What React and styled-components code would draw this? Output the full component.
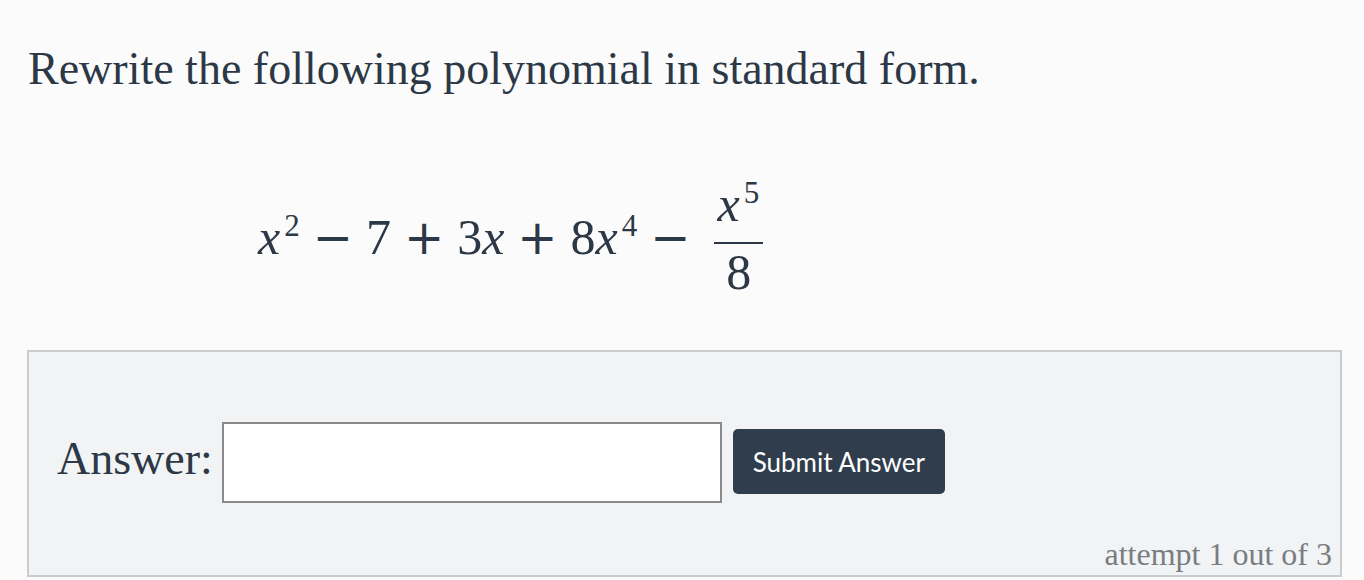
import React from "react";
import styled, { createGlobalStyle } from "styled-components";

const Global = createGlobalStyle`
  html, body { margin: 0; padding: 0; background: #fbfbfb; }
  body { font-family: "Liberation Serif", serif; color: #2c3846; }
`;

const Page = styled.div`
  width: 1364px;
  height: 580px;
  box-sizing: border-box;
  padding: 43px 22px 0 27px;
  overflow: hidden;
`;

const Heading = styled.h1`
  margin: 0 0 0 1px;
  font-family: "Liberation Serif", serif;
  font-weight: 400;
  font-size: 46px;
  line-height: 52px;
  color: #2c3846;
`;

const MathBlock = styled.div`
  margin: 73px 0 0 231px;
  height: 140px;
  display: flex;
  align-items: center;
  font-family: "Liberation Serif", serif;
  font-size: 50px;
  color: #2c3846;
`;

const Expr = styled.div`
  line-height: 60px;
  white-space: nowrap;
`;

const Var = styled.span`
  font-style: italic;
`;

const Sup = styled.span`
  font-size: 31px;
  vertical-align: 18px;
  line-height: 0;
  margin-left: 4px;
`;

const Op = styled.span`
  font-family: "DejaVu Sans", sans-serif;
  font-size: 48px;
  line-height: 0;
  margin: 0 ${(p) => p.$gap ?? 13}px;
`;

const Frac = styled.span`
  display: inline-flex;
  flex-direction: column;
  align-items: stretch;
  vertical-align: 33px;
  margin-left: 11px;
`;

const Num = styled.span`
  padding: 0 4px 13px 3px;
  border-bottom: 2px solid #2c3846;
  line-height: 1;
  text-align: center;
`;

const Den = styled.span`
  padding-top: 3px;
  line-height: 1;
  text-align: center;
`;

const Panel = styled.div`
  margin-top: 42px;
  height: 227px;
  box-sizing: border-box;
  border: 2px solid #cbcccf;
  background: #f2f3f5;
  display: flex;
  flex-direction: column;
  padding: 70px 8px 0 28px;
`;

const Row = styled.div`
  display: flex;
  align-items: center;
`;

const Label = styled.label`
  font-family: "Liberation Serif", serif;
  font-size: 46px;
  color: #2c3846;
  margin: 0 9px 8px 0;
`;

const Input = styled.input`
  width: 500px;
  height: 81px;
  box-sizing: border-box;
  border: 2px solid #8a8a8a;
  background: #fff;
  margin-right: 11px;
  outline: none;
`;

const Button = styled.button`
  height: 65px;
  width: 212px;
  margin-bottom: 2px;
  border: none;
  border-radius: 5px;
  background: #2f3d4d;
  color: #fff;
  font-family: Lato, sans-serif;
  font-size: 26px;
  cursor: pointer;
`;

const Attempt = styled.div`
  margin-top: auto;
  align-self: flex-end;
  font-family: "Liberation Serif", serif;
  font-size: 32px;
  color: #7a7d80;
  line-height: 36px;
  padding-bottom: 3px;
`;

export default function App() {
  return (
    <>
      <Global />
      <Page>
        <Heading>Rewrite the following polynomial in standard form.</Heading>
        <MathBlock>
          <Expr>
            <Var>x</Var>
            <Sup>2</Sup>
            <Op>−</Op>
            <span>7</span>
            <Op>+</Op>
            <span>3</span>
            <Var>x</Var>
            <Op>+</Op>
            <span>8</span>
            <Var>x</Var>
            <Sup>4</Sup>
            <Op>−</Op>
            <Frac>
              <Num>
                <Var>x</Var>
                <Sup>5</Sup>
              </Num>
              <Den>8</Den>
            </Frac>
          </Expr>
        </MathBlock>
        <Panel>
          <Row>
            <Label>Answer:</Label>
            <Input type="text" />
            <Button>Submit Answer</Button>
          </Row>
          <Attempt>attempt 1 out of 3</Attempt>
        </Panel>
      </Page>
    </>
  );
}
